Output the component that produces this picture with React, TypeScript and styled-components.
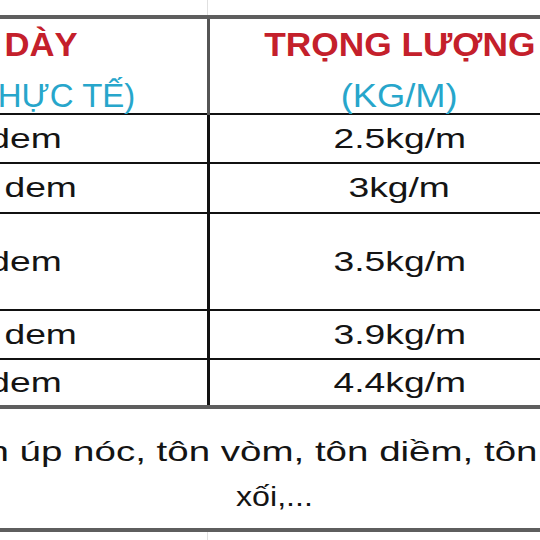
import React from "react";
import styled, { createGlobalStyle } from "styled-components";

const GlobalStyle = createGlobalStyle`
  html, body { margin: 0; padding: 0; background: #ffffff; }
  #root { width: 540px; height: 540px; }
`;

const Stage = styled.div`
  width: 540px;
  height: 540px;
  overflow: hidden;
  background: #ffffff;
  font-family: "Liberation Sans", Arial, Helvetica, sans-serif;
`;

const Sheet = styled.div`
  margin-left: -187px;
  width: 776px;
`;

const Gap = styled.div<{ $h: number }>`
  display: grid;
  grid-template-columns: 395px 1fr;
  height: ${(p) => p.$h}px;
`;

const GapLine = styled.div`
  border-right: 1px solid #e0e0e0;
`;

const Table = styled.div`
  border-top: 4px solid #5e5e5e;
  border-bottom: 4px solid #5e5e5e;
`;

const Row = styled.div<{ $h: number; $heavy?: boolean }>`
  display: grid;
  grid-template-columns: 397px 379px;
  height: ${(p) => p.$h}px;
  border-bottom: ${(p) => (p.$heavy ? "4px solid #5e5e5e" : "2px solid #111111")};
`;

const Cell = styled.div<{ $divider?: string }>`
  display: flex;
  flex-direction: column;
  align-items: center;
  justify-content: center;
  box-sizing: border-box;
  white-space: nowrap;
  border-right: ${(p) => (p.$divider ? `3px solid ${p.$divider}` : "none")};
`;

const NoteRow = styled.div`
  height: 119px;
  box-sizing: border-box;
  padding: 11px 0 0 146px;
  display: flex;
  flex-direction: column;
  align-items: center;
  justify-content: center;
  white-space: nowrap;
`;

const Stretch = styled.span<{ $sx: number }>`
  display: inline-block;
  transform: scaleX(${(p) => p.$sx});
  transform-origin: center;
`;

const HeadRed = styled(Stretch)`
  color: #c4202b;
  font-weight: 700;
  font-size: 33px;
  line-height: 51px;
`;

const HeadTeal = styled(Stretch)`
  color: #27a6cb;
  font-weight: 400;
  font-size: 33px;
  line-height: 51px;
`;

const Value = styled(Stretch)`
  color: #141414;
  font-size: 28px;
  line-height: 32px;
`;

const NoteLine = styled(Stretch)`
  color: #141414;
  font-size: 28px;
  line-height: 45px;
`;

const rows = [
  { h: 47, thick: "3 dem", weight: "2.5kg/m" },
  { h: 48, thick: "3.5 dem", weight: "3kg/m" },
  { h: 95, thick: "4 dem", weight: "3.5kg/m" },
  { h: 47, thick: "4.5 dem", weight: "3.9kg/m" },
  { h: 45, thick: "5 dem", weight: "4.4kg/m" },
];

export default function App() {
  return (
    <>
      <GlobalStyle />
      <Stage>
        <Sheet>
          <Gap $h={15}>
            <GapLine />
          </Gap>
          <Table>
            <Row $h={94}>
              <Cell $divider="#555555">
                <HeadRed $sx={1.05}>ĐỘ DÀY</HeadRed>
                <HeadTeal $sx={1}>(DEM THỰC TẾ)</HeadTeal>
              </Cell>
              <Cell>
                <HeadRed $sx={1.07}>TRỌNG LƯỢNG</HeadRed>
                <HeadTeal $sx={1.1}>(KG/M)</HeadTeal>
              </Cell>
            </Row>
            {rows.map((r, i) => (
              <Row key={r.weight} $h={r.h} $heavy={i === rows.length - 1}>
                <Cell $divider="#111111">
                  <Value $sx={1.33}>{r.thick}</Value>
                </Cell>
                <Cell>
                  <Value $sx={1.33}>{r.weight}</Value>
                </Cell>
              </Row>
            ))}
            <NoteRow>
              <NoteLine $sx={1.375}>và tôn úp nóc, tôn vòm, tôn diềm, tôn máng</NoteLine>
              <NoteLine $sx={1.15}>xối,...</NoteLine>
            </NoteRow>
          </Table>
          <Gap $h={8}>
            <GapLine />
          </Gap>
        </Sheet>
      </Stage>
    </>
  );
}
